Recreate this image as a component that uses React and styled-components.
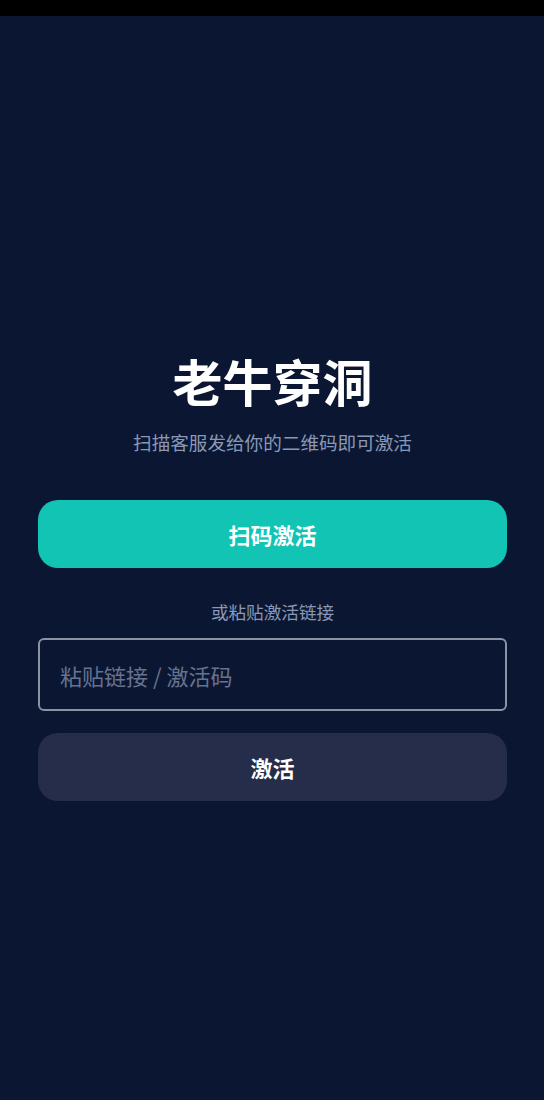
import React from 'react'
import styled, { createGlobalStyle } from 'styled-components'

const GlobalStyle = createGlobalStyle`
  html, body {
    margin: 0;
    padding: 0;
    background: #0b1732;
  }
  * { box-sizing: border-box; }
`

const font = `"Noto Sans CJK SC", "Noto Sans", sans-serif`

const Screen = styled.div`
  width: 544px;
  height: 1100px;
  background: #0b1732;
  display: flex;
  flex-direction: column;
  font-family: ${font};
`

const StatusBar = styled.div`
  height: 16px;
  background: #000;
  flex-shrink: 0;
`

const Content = styled.main`
  display: flex;
  flex-direction: column;
  align-items: stretch;
  padding: 326px 37px 0 38px;
`

const Title = styled.h1`
  margin: 0;
  text-align: center;
  color: #ffffff;
  font-size: 50px;
  font-weight: 700;
  line-height: 76px;
`

const Subtitle = styled.p`
  margin: 11px 0 45px;
  text-align: center;
  color: #8a98b6;
  font-size: 18.6px;
  line-height: 26px;
`

const Button = styled.button`
  height: 68px;
  border: none;
  border-radius: 20px;
  background: ${p => (p.$primary ? '#12c4b3' : '#262d4a')};
  color: #ffffff;
  font-family: ${font};
  font-size: 22px;
  font-weight: 700;
  cursor: pointer;
`

const Divider = styled.p`
  margin: 32px 0 14px;
  text-align: center;
  color: #8a98b6;
  font-size: 17.6px;
  line-height: 24px;
`

const Input = styled.input`
  height: 73px;
  border: 2px solid #8c91a3;
  border-radius: 6px;
  background: transparent;
  padding: 0 20px;
  color: #ffffff;
  font-family: ${font};
  font-size: 22px;
  outline: none;
  margin-bottom: 22px;

  &::placeholder {
    color: #67728f;
  }
`

export default function App() {
  return (
    <>
      <GlobalStyle />
      <Screen>
        <StatusBar />
        <Content>
          <Title>老牛穿洞</Title>
          <Subtitle>扫描客服发给你的二维码即可激活</Subtitle>
          <Button $primary>扫码激活</Button>
          <Divider>或粘贴激活链接</Divider>
          <Input placeholder="粘贴链接 / 激活码" />
          <Button>激活</Button>
        </Content>
      </Screen>
    </>
  )
}
